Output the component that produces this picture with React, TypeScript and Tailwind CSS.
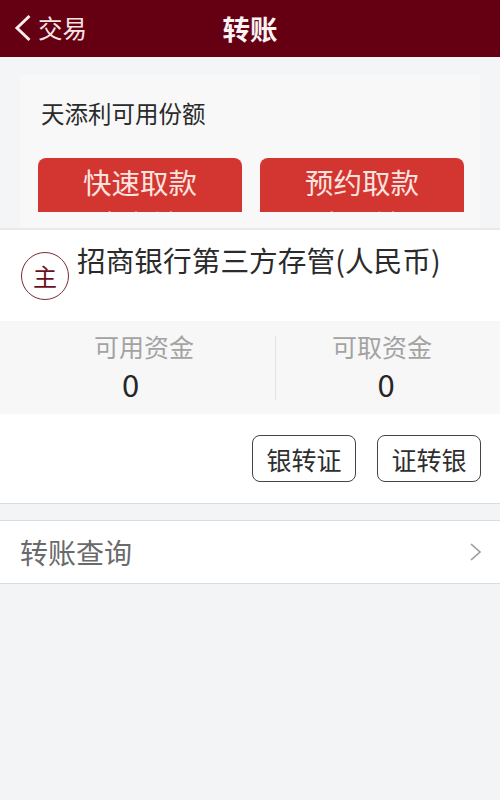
const FONT_STACK = "font-['Noto_Sans_CJK_SC','Liberation_Sans',sans-serif]"

/**
 * Red withdraw button; the lower label is cut off by the card edge.
 */
function WithdrawButton({ label, sub }: { label: string; sub: string }) {
  return (
    <div className="h-[54px] w-[204px] shrink-0 overflow-hidden rounded-t-lg bg-[#d33631] text-center">
      <p className="mt-[5px] h-[45px] text-[28.5px] leading-[38px] text-[#fbe3df]">{label}</p>
      <p className="text-[20px] leading-[26px] text-[#fbe3df]">{sub}</p>
    </div>
  )
}

function BalanceCell({
  label,
  value,
  valueClass,
}: {
  label: string
  value: string
  valueClass: string
}) {
  return (
    <div className="flex flex-col items-center">
      <p className="text-[25px] leading-[30px] text-[#a3a3a3]">{label}</p>
      <p className={`mt-[7px] text-[31px] leading-[32px] text-[#262626] ${valueClass}`}>{value}</p>
    </div>
  )
}

function TransferButton({ label }: { label: string }) {
  return (
    <button
      type="button"
      className="h-[47px] w-[104px] rounded-lg border-[1.5px] border-[#444444] bg-white text-[25px] leading-[30px] text-[#2e2e2e]"
    >
      {label}
    </button>
  )
}

export default function App() {
  return (
    <div className={`flex h-[800px] w-[500px] flex-col overflow-hidden bg-[#f3f4f6] ${FONT_STACK}`}>
      <header className="relative flex h-[57px] shrink-0 items-center justify-center bg-[#650013]">
        <div className="absolute left-[14px] top-[13px] flex items-center gap-[6px]">
          <svg width="18" height="28" viewBox="0 0 18 28" fill="none" stroke="#f7ebeb" strokeWidth="3">
            <path d="M15.5 2 3 14 15.5 26" />
          </svg>
          <span className="text-[24.5px] leading-[30px] text-[#f7e5e5]">交易</span>
        </div>
        <h1 className="mb-[2px] text-[27.5px] font-bold leading-[34px] text-[#fbf3f3]">转账</h1>
      </header>

      <section className="h-[173px] shrink-0 border-b-2 border-[#e9e9e9] bg-[#f4f5f7] px-[20px] pt-[18px]">
        <div className="h-[153px] bg-[#f8f8f9] pl-[18px] pr-[16px]">
          <p className="pl-[3px] pt-[23px] text-[23.5px] leading-[30px] text-[#2a2a2a]">天添利可用份额</p>
          <div className="mt-[30px] flex gap-[18px]">
            <WithdrawButton label="快速取款" sub="实时到账" />
            <WithdrawButton label="预约取款" sub="次日到账" />
          </div>
        </div>
      </section>

      <section className="flex h-[91px] shrink-0 bg-white pl-[21px]">
        <div className="mt-[22px] flex h-[48px] w-[48px] items-center justify-center rounded-full border border-[#7b2a35]">
          <span className="text-[24px] leading-[30px] text-[#6b0f1c]">主</span>
        </div>
        <p className="ml-[8px] mt-[12px] text-[28.7px] leading-[36px] text-[#2b2b2b]">招商银行第三方存管(人民币)</p>
      </section>

      <section className="flex h-[93px] shrink-0 items-center bg-[#f7f7f7] pb-[4px]">
        <div className="flex w-[275px] justify-center pl-[13px]">
          <BalanceCell label="可用资金" value="0" valueClass="mr-[27px]" />
        </div>
        <div className="mt-[4px] h-[64px] w-px bg-[#e3e3e3]" />
        <div className="flex flex-1 justify-center pr-[12px]">
          <BalanceCell label="可取资金" value="0" valueClass="ml-[8px]" />
        </div>
      </section>

      <section className="flex h-[90px] shrink-0 items-start justify-end gap-[21px] border-b border-[#dcdcdc] bg-white pr-[19px] pt-[21px]">
        <TransferButton label="银转证" />
        <TransferButton label="证转银" />
      </section>

      <section className="mt-[16px] flex h-[64px] shrink-0 items-center justify-between border-y border-[#dcdcdc] bg-white pl-[20px] pr-[18px]">
        <span className="text-[28px] leading-[36px] text-[#6a6a6a]">转账查询</span>
        <svg width="13" height="20" viewBox="0 0 13 20" fill="none" stroke="#9a9a9a" strokeWidth="1.6">
          <path d="M2 2 11 10 2 18" />
        </svg>
      </section>
    </div>
  )
}
